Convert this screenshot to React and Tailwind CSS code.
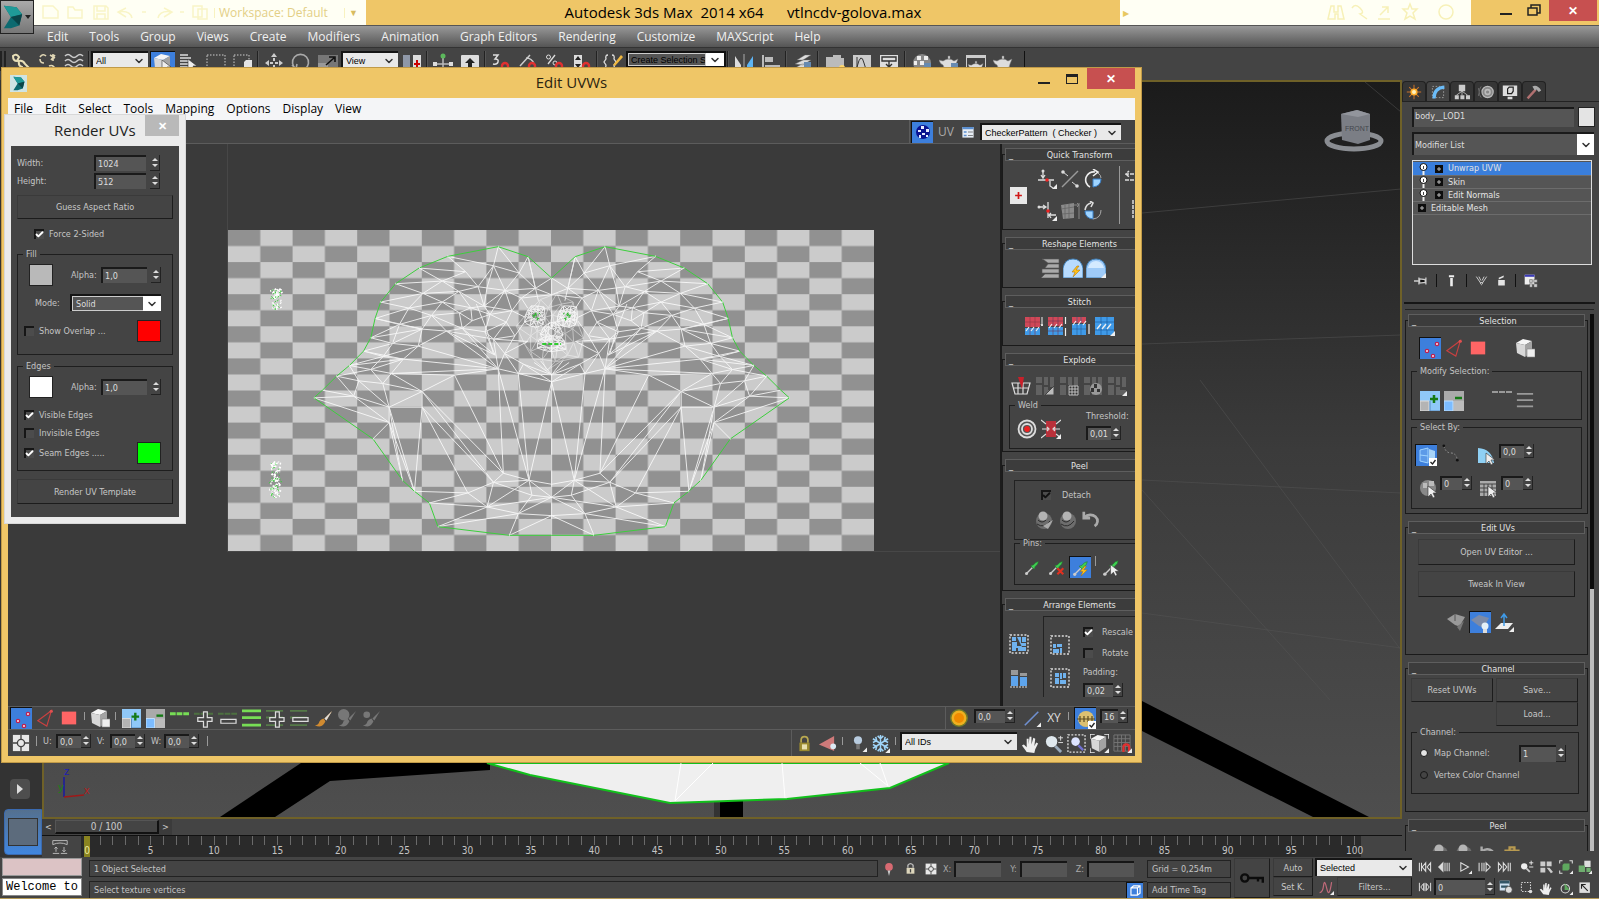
import React from "react";
import clsx from "clsx";
import { ChevronDown, Check } from "lucide-react";

/* ---------- icons, all on a 20x20 grid ---------- */

const corner = <path d="M20 15v5h-5z" fill="#eee" />;
const bolt = <path d="M14 8l-5 6h3l-2 5 7-7h-4l3-4z" fill="#ffc21a" stroke="#a86a00" strokeWidth=".5" />;
const cursor = <path d="M9 7v11l3-3 2 4 2-1-2-4h4z" fill="#eee" stroke="#333" strokeWidth=".6" />;
const cube = (
  <g>
    <path d="M1 5l7-4 9 2-7 4z" fill="#f6f6f6" />
    <path d="M1 5l9 2v12l-8-4z" fill="#d8d8d8" />
    <path d="M10 7l7-4v11l-7 5z" fill="#a4a4a4" />
  </g>
);
const pin = (
  <g>
    <path d="M3 17l7-7" stroke="#ccc" strokeWidth="1.5" />
    <circle cx="3" cy="17" r="1.8" fill="#ccc" />
    <path d="M8 8l4 4 1-3 3-3 1-3-3 1-3 3z" fill="#3fcf52" stroke="#1e7a2a" strokeWidth=".6" />
  </g>
);
const sphere = (
  <g>
    <circle cx="10" cy="11" r="8" fill="#6d6d6d" />
    <circle cx="9" cy="6" r="4.5" fill="#b4b4b4" />
    <path d="M4 10q4 4 8 0M3 14q7 5 13-3" stroke="#2c2c2c" fill="none" />
  </g>
);
const teapot = (
  <path d="M4 9q6-4 11 0l4-2-2 5q-1 6-4 6H8q-3-1-4-5Q1 12 0 8l4 1zM9 4h2v3H9z" fill="#ddd" stroke="#777" strokeWidth=".5" />
);
const magnet = <path d="M11 19v-5a3 3 0 016 0v5" fill="none" stroke="#e03030" strokeWidth="2.4" />;
const blocks = <path d="M1 1h6v6H1zM9 1h4v8H9zM15 1h4v10h-4zM1 9h6v10H1zM9 11h4v3h6v5H9z" />;
const dashBox = <rect x="1" y="1" width="18" height="18" fill="none" stroke="#ddd" strokeWidth="1.4" strokeDasharray="2 1.6" />;
const brush = <path d="M19 2l-8 8 2 2zM10 10q-4 1-5 5-1 2-4 2 8 4 11-4z" />;
const hand = (
  <path d="M6 19q-2-3-5-7l2-1 3 3V5h2v6l1-8h2v8l2-7 2 1-1 8 2-4 2 1-3 6-1 4z" fill="#eee" />
);
const pad = <path d="M1 7l8-5 10 3-4 7-3 2-3-1z" />;

const icons = {
  link: <path d="M3 4q3-3 6 1l-2 4q-4 0-4-5zm6 5q4-1 6 3l4 4-4 3q-3-1-3-4-4-1-3-6z" fill="none" stroke="#e8dfb8" strokeWidth="2" />,
  unlink: <path d="M3 5q3-4 6-1M3 7q0 4 4 4M12 14q4-2 6 3M12 16q1 3 4 3M13 3l5 3M14 8l4-5M16 9V2" fill="none" stroke="#e0d6b4" strokeWidth="1.6" />,
  wave: <path d="M1 4q3-3 6 0t6 0 6 0M1 9q3-3 6 0t6 0 6 0M1 14q3-3 6 0t6 0 6 0" fill="none" stroke="#ccc" strokeWidth="1.6" />,
  pick: <g>{cube}{cursor}</g>,
  byName: <g><path d="M1 3h8M1 6h11M1 9h8M1 12h11M1 15h8" stroke="#ddd" strokeWidth="1.5" />{cursor}</g>,
  region: <rect x="1" y="3" width="18" height="16" fill="none" stroke="#ccc" strokeDasharray="1.5 1.5" />,
  windowed: <g><rect x="1" y="3" width="15" height="16" fill="none" stroke="#ccc" strokeDasharray="1.5 1.5" /><path d="M11 10l2-2h6v9l-2 2h-6z" fill="#e4e4e4" /></g>,
  move: <path d="M10 1l3 4H7zM1 11l4-3v6zM19 11l-4-3v6zM10 20l3-4H7zM9 6h2v3H9zM6 10h3v2H6zM11 10h3v2h-3zM9 13h2v3H9z" fill="#ccc" />,
  rotate: <path d="M5 17A8 8 0 1114 17M1 13l4 4 1-5" fill="none" stroke="#aaa" strokeWidth="1.6" />,
  scale: <g><path d="M0 3h20v17H0z" fill="#777" /><path d="M0 11h10v9H0z" fill="#999" /><path d="M8 13l8-7M11 5h6v5" stroke="#111" strokeWidth="1.6" fill="none" /></g>,
  pivot: <g><path d="M1 3h7v17H1z" fill="#8f98a8" /><path d="M11 3h8v17h-8z" fill="#ddd" /><path d="M15 8v8M12 12h6" stroke="#c00" strokeWidth="2" /></g>,
  manip: <g><path d="M10 5v15M2 12h16" stroke="#bbb" strokeWidth="1.5" /><circle cx="10" cy="4" r="2.5" fill="#5cb85c" /><path d="M0 10h4v4H0zM16 10h4v4h-4z" fill="#ddd" /></g>,
  keyboard: <g><rect x="1" y="3" width="18" height="16" rx="1" fill="#ddd" /><path d="M10 6l5 5h-3v4H8v-4H5z" fill="#222" /></g>,
  snap: <g><path d="M2 3h5l-3 4q4 0 3 3t-5 2" fill="none" stroke="#ddd" strokeWidth="1.5" />{magnet}</g>,
  angle: <g><path d="M2 14L12 3M8 6q6 0 8 6" fill="none" stroke="#ccc" strokeWidth="1.5" />{magnet}</g>,
  percent: <g><path d="M3 12l7-9" stroke="#ddd" strokeWidth="1.3" /><circle cx="3.500" cy="5" r="2" fill="none" stroke="#ddd" /><circle cx="10" cy="11" r="2" fill="none" stroke="#ddd" />{magnet}</g>,
  spinSnap: <g><path d="M2 3h8v14H2z" fill="#ddd" /><path d="M6 4l3 4H3zM6 16l3-4H3z" fill="#222" />{magnet}</g>,
  braces: <g><path d="M5 3q-3 0-2 4l-2 3 2 3q-1 4 2 4M9 3q3 0 2 4l2 3-2 3q1 4-2 4" fill="none" stroke="#ddd" strokeWidth="1.3" /><path d="M10 13l8-10 2 2-8 9z" fill="#f0b840" /></g>,
  mirror: <g><path d="M1 4l6 9v7H1z" fill="#ddd" /><path d="M10 2v18" stroke="#aaa" /><path d="M19 4l-6 9v7h6z" fill="#5db4f4" /></g>,
  align: <path d="M1 3h2v17H1zM4 5h8v5H4zM4 13h15v4H4z" fill="#bbb" />,
  layers: <g><path d="M5 8l8-5h6l-8 5zM3 12l8-4h8l-8 5zM1 17l9-5h8l-8 5z" fill="#ddd" stroke="#666" strokeWidth=".4" /><path d="M12 10h7v9h-7z" fill="#678ab0" /></g>,
  ribbon: <g><path d="M1 5h7V3h8v3h3v12H1z" fill="#bbb" /><circle cx="17" cy="16" r="3" fill="#ffd76a" /></g>,
  curve: <g><path d="M1 3h18v17H1z" fill="#ccc" /><path d="M5 5v13M5 15q4-16 7-4t6 5" fill="none" stroke="#333" /></g>,
  schematic: <g><path d="M1 3h18v17H1z" fill="#ddd" /><path d="M3 5h14v4H3zM10 9v6M7 12l3 3 3-3" fill="none" stroke="#333" strokeWidth="1.4" /></g>,
  material: <g><circle cx="10" cy="11" r="9" fill="#888" /><path d="M5 4h4v4H5zM12 4h4v4h-4zM2 9h3v4H2zM8 9h4v4H8z" fill="#eee" /><path d="M12 11h7v8h-7z" fill="#678ab0" /></g>,
  teapot,
  teapotSetup: <g>{teapot}<path d="M12 11h7v8h-7z" fill="#678ab0" /></g>,
  teapotBox: <g><path d="M0 3h20v17H0z" fill="#ccc" /><path d="M1 6h18v13H1z" fill="#444" /><g transform="translate(2 6) scale(.8)">{teapot}</g></g>,
  /* UV editor */
  checker: <g><circle cx="10" cy="10" r="7" fill="#0a1290" /><path d="M8 4h3v3H8zM13 7h3v3h-3zM5 8h3v2H5zM9 11h3v2H9zM6 13h2v3H6zM13 13h2v2h-2z" fill="#e8ecff" /></g>,
  props: <g><path d="M2 3h16v15H2z" fill="#e8eef6" /><path d="M2 3h16v3H2zM4 9h4v2H4zM4 14h4v2H4z" fill="#5b8fd0" /><path d="M10 10h7M10 15h7" stroke="#555" /></g>,
  vertex: <g fill="#fff" stroke="#c02050" strokeWidth="1.4"><circle cx="16" cy="5" r="1.600" /><circle cx="6" cy="12" r="1.600" /><circle cx="12" cy="17" r="1.600" /></g>,
  edge: <g><path d="M17 2L2 13l10 6z" fill="none" stroke="#c84040" strokeWidth="1.300" /><circle cx="17" cy="2.500" r="1.800" fill="#e05050" /></g>,
  face: <path d="M1 2h18v16H1z" fill="#ff6565" />,
  element: <g>{cube}<path d="M12 11h8v8h-8z" fill="#eee" stroke="#888" strokeWidth=".6" /></g>,
  grow: <g><path d="M0 0h20v20H0z" fill="#8fc8f8" /><path d="M0 10h9v10H0z" fill="#b4b4b4" stroke="#ddd" /><path d="M10 10v10h10" stroke="#5a8cc0" fill="none" /><path d="M14 4v8M10 8h8" stroke="#157a15" strokeWidth="2.500" /></g>,
  shrink: <g><path d="M0 0h20v20H0z" fill="#aaa" /><path d="M10 10h10v10H10z" fill="#bcbcbc" /><path d="M0 10h9v10H0z" fill="#7cbcff" stroke="#bfe0ff" /><path d="M11 7h7" stroke="#157a15" strokeWidth="2.500" /></g>,
  dashesGreen: <path d="M0 5h6M7 5h6M14 5h6" stroke="#77dd55" strokeWidth="3" />,
  dashes: <path d="M0 5h6M7 5h6M14 5h6" stroke="#999" strokeWidth="2" />,
  bars: <path d="M1 2h18M1 9h18M1 16h18" stroke="#999" strokeWidth="2" />,
  barsGreen: <path d="M0 2h20M0 9h20M0 17h20" stroke="#77dd55" strokeWidth="3" />,
  ringPlus: <g><path d="M0 5h6M7 5h6M14 5h6" stroke="#4d7040" strokeWidth="2" /><path d="M10 3h4v6h5v4h-5v6h-4v-6H4V9h6z" fill="#444" stroke="#ddd" strokeWidth="1.300" /></g>,
  ringMinus: <g><path d="M0 5h6M7 5h6M14 5h6" stroke="#4d7040" strokeWidth="2" /><path d="M3 11h16v4H3z" fill="#444" stroke="#ddd" strokeWidth="1.300" /></g>,
  loopPlus: <g><path d="M0 2h18M0 9h18M0 17h18" stroke="#557a48" strokeWidth="2" /><path d="M10 3h4v6h5v4h-5v6h-4v-6H4V9h6z" fill="#444" stroke="#ddd" strokeWidth="1.300" /></g>,
  loopMinus: <g><path d="M0 2h18M0 9h18M0 17h18" stroke="#557a48" strokeWidth="2" /><path d="M3 9h16v4H3z" fill="#444" stroke="#ddd" strokeWidth="1.300" /></g>,
  brush: <g fill="#d08a30">{brush}<path d="M19 2l-8 8 2 2z" fill="#ddd" /></g>,
  brushBig: <g fill="#777"><circle cx="6" cy="6" r="6" />{brush}</g>,
  brushSmall: <g fill="#777"><circle cx="5" cy="6" r="3.500" />{brush}</g>,
  gizmo: <g><path d="M1 1h18v18H1z" fill="#e8e8e8" /><path d="M10 1v18M1 10h18" stroke="#444" strokeWidth="1.500" /><circle cx="10" cy="10" r="4" fill="#e8e8e8" stroke="#444" strokeWidth="1.500" /></g>,
  sun: <g><circle cx="10" cy="10" r="9" fill="#6f7a2a" /><circle cx="10" cy="10" r="7.500" fill="#f0b020" /><circle cx="10" cy="10" r="5" fill="#ee8a00" /></g>,
  slash: <g><path d="M2 18L17 3" stroke="#6f8fd0" strokeWidth="1.800" />{corner}</g>,
  ruler: <g><circle cx="10" cy="10" r="8" fill="#dcc070" /><path d="M1 10h18M4 7v6M8 7v6M12 7v6M16 7v6" stroke="#5a4a20" strokeWidth="1.200" /><path d="M12 12h8v8h-8z" fill="#fff" /><path d="M13.500 16l2 2 3-4" stroke="#222" fill="none" strokeWidth="1.300" /></g>,
  lock: <g><path d="M6 9V6q0-4 4-4t4 4v3" fill="none" stroke="#b8a850" strokeWidth="2" /><path d="M4 9h12v10H4z" fill="#9a8a30" /><path d="M7 11h6v6H7z" fill="#e8e0b0" /></g>,
  flag: <g><path d="M1 11L17 2v16z" fill="#cf7a7a" /><circle cx="16" cy="13" r="3" fill="#dceaf4" /></g>,
  bulb: <g><circle cx="10" cy="7" r="4.500" fill="#b8cce0" /><path d="M8 11h4v6H8z" fill="#777" />{corner}</g>,
  snow: <g><path d="M10 1v18M2 5l16 10M2 15L18 5M7 2l3 3 3-3M7 18l3-3 3 3M2 9l4-2-1-4M18 9l-4-2 1-4M2 11l4 2-1 4M18 11l-4 2 1 4" stroke="#9fd4f8" strokeWidth="1.600" fill="none" />{corner}</g>,
  hand,
  zoom: <g><circle cx="8" cy="8" r="6" fill="#dfe8ee" /><path d="M12 13l6 6" stroke="#9ab" strokeWidth="3" /><path d="M15 4h5M17.500 2v5M15 9h5" stroke="#ddd" /></g>,
  zoomRegion: <g>{dashBox}<circle cx="9" cy="8" r="4.500" fill="#dde4ff" /><path d="M12 12l5 5" stroke="#6f6fd0" strokeWidth="2.500" /></g>,
  extents: <g><path d="M0 5V0h5M15 0h5v5M5 20H0v-5" fill="none" stroke="#eee" strokeWidth="1.500" />{cube}{corner}</g>,
  gridSnap: <g><path d="M1 1h17v17H1zM5 1v17M9 1v17M13 1v17M1 5h17M1 9h17M1 13h17" fill="none" stroke="#777" />{magnet}{corner}</g>,
  /* UV editor side panel */
  alignH: <g><path d="M6 2v6M4 6l2 3 2-3M1 11h16M13 12v5l3 2" stroke="#ddd" strokeWidth="1.300" fill="none" /><circle cx="6" cy="2" r="1.500" fill="#ddd" /><circle cx="10" cy="11" r="1.800" fill="#e22" />{corner}</g>,
  alignV: <g><path d="M1 6h7M6 4l3 2-3 2M11 1v16M12 14h7M14 12l-2 2 2 3" stroke="#ddd" strokeWidth="1.300" fill="none" /><circle cx="2" cy="6" r="1.500" fill="#ddd" /><circle cx="11" cy="10" r="1.800" fill="#e22" />{corner}</g>,
  linear: <g><path d="M2 18L18 2" stroke="#999" strokeWidth="1.500" /><path d="M3 3l5 4M12 13l5 4" stroke="#ddd" /><circle cx="3" cy="3" r="1.800" fill="#ddd" /><circle cx="17" cy="17" r="1.800" fill="#ddd" /></g>,
  skewed: <g><path d="M1 4l13-2v15L3 18z" fill="#8a8a8a" /><path d="M5 4v14M9 3v14M1 8l13-2M2 13l12-1" stroke="#666" strokeWidth=".8" /><path d="M14 4h4M17 2l2 2-2 2M19 2v16" stroke="#888" fill="none" /></g>,
  turnCw: <g><path d="M10 10h8q0 7-8 8z" fill="#9fd4ff" stroke="#3a80c8" /><path d="M7 18A8 8 0 0112 3M10 0l5 3-5 4" fill="none" stroke="#eee" strokeWidth="1.600" /><path d="M15 4q3 2 3 5" fill="none" stroke="#aaa" /></g>,
  turnCcw: <g><path d="M10 10H2q0 7 8 8z" fill="#9fd4ff" stroke="#3a80c8" /><path d="M18 9q0 8-8 9" fill="none" stroke="#aaa" /><path d="M2 9q1-6 6-7M7 0l3 2-2 4" fill="none" stroke="#ddd" strokeWidth="1.600" /></g>,
  pivotPlus: <g><path d="M0 0h20v20H0z" fill="#e8e8e8" /><path d="M10 6v8M6 10h8" stroke="#d01818" strokeWidth="2" /></g>,
  straighten: <path d="M2 1h17v4H8L4 2zM8 6h11v4H5zM2 11h17v4H2zM5 16h14v4H1z" fill="#aaa" stroke="#555" strokeWidth=".6" />,
  relaxAuto: <g><path d="M0 20V10q2-9 10-9t10 9v10z" fill="#b8dcff" stroke="#4080b8" />{bolt}</g>,
  relax: <g><path d="M0 20V10q2-9 10-9t10 9v10z" fill="#9fcbf8" stroke="#4080b8" /><path d="M2 10q2-7 8-7t8 7z" fill="#d4eaff" />{corner}</g>,
  stitchA: <g><path d="M2 1h15v10H2z" fill="#d04858" /><path d="M2 12h15v7H2z" fill="#3f9ae8" /><path d="M7 1v18M12 1v18M2 6h15" stroke="#8c3848" strokeWidth=".6" /><path d="M3 15l3-4M8 15l3-4M13 15l3-4" stroke="#eee" strokeWidth="1.200" /><path d="M19 1v9M18 8l1 2 1-2" stroke="#eee" fill="none" /></g>,
  stitchB: <g><path d="M1 1h15v9H1z" fill="#d04858" /><path d="M1 11h15v8H1z" fill="#3f9ae8" /><path d="M6 1v18M11 1v18M1 5h15M1 15h15" stroke="#6a3a58" strokeWidth=".6" /><path d="M2 12l3-4M7 12l3-4M12 12l3-4M18.500 1v7M18.500 12v8" stroke="#eee" strokeWidth="1.200" /></g>,
  stitchC: <g><path d="M1 1h14v6H1z" fill="#d04858" /><path d="M1 8h14v11H1z" fill="#3f9ae8" /><path d="M6 1v18M10 1v18M1 13h14" stroke="#2a5a90" strokeWidth=".6" /><path d="M2 9l3-4M7 9l3-4M12 9l3-4M18 8v10" stroke="#eee" strokeWidth="1.200" /></g>,
  stitchD: <g><path d="M0 1h19v18H0z" fill="#3f9ae8" /><path d="M0 6h19M0 14h19M6 1v18M12 1v18" stroke="#1c5ea0" strokeWidth=".7" /><path d="M2 13l4-5M7 13l4-5M12 13l4-5" stroke="#eee" strokeWidth="1.300" />{corner}</g>,
  basket: <g><path d="M1 7h18l-3 11H4zM3 12h14M7 7v11M12 7v11" fill="none" stroke="#ddd" strokeWidth="1.200" /><path d="M7 1h6l-2 12z" fill="#c8202a" /></g>,
  breakA: <g fill="#626262">{blocks}<path d="M10 19l9-9v9z" fill="#bbb" stroke="#444" /></g>,
  breakB: <g fill="#626262">{blocks}<path d="M9 10h10v9H9z" fill="#333" /><path d="M10 10h9v9h-9zM13 10v9M16 10v9M10 13h9M10 16h9" stroke="#ccc" fill="none" strokeWidth=".9" /></g>,
  breakC: <g fill="#626262">{blocks}<circle cx="13" cy="13" r="6" fill="#999" /><path d="M11 8h3v4h-3zM8 12h3v4H8zM14 13h3v3h-3z" fill="#333" /></g>,
  breakD: <g fill="#626262">{blocks}{corner}</g>,
  target: <g fill="none" stroke="#ddd" strokeWidth="1.800"><circle cx="10" cy="10" r="8.500" fill="#555" /><circle cx="10" cy="10" r="5" /><circle cx="10" cy="10" r="2" fill="#e22" stroke="#e22" /></g>,
  weld: <g><path d="M5 2h10v16H5z" fill="#b8303a" /><path d="M0 1l5 4M20 1l-5 4M0 19l5-4M20 19l-5-4M1 10h6M19 10h-6M6 8l2 2-2 2M14 8l-2 2 2 2" stroke="#ddd" fill="none" strokeWidth="1.200" />{corner}</g>,
  peel: sphere,
  peelMode: <g>{sphere}<path d="M9 16l10-6-5 9z" fill="#aaa" /></g>,
  undo: <path d="M3 8A8 7 0 1114 18M2 2v7h7" fill="none" stroke="#aaa" strokeWidth="3" />,
  pin,
  unpin: <g>{pin}<path d="M11 11l7 7M18 11l-7 7" stroke="#e03020" strokeWidth="2.500" /></g>,
  autoPin: <g>{pin}{bolt}</g>,
  pickPin: <g>{pin}{cursor}</g>,
  packA: <g fill="#6fb2ee">{dashBox}<path d="M3 3h4v4H3zM8 3h4v6h5v3H8V8H3v9h4v-3h2v3h8v-4h-4M13 3h4v5h-4z" /></g>,
  packB: <g><path d="M2 2h7v5H2zM11 5h7v3h-7z" fill="#999" /><path d="M2 8h7v10H2zM11 9h7v9h-7z" fill="#5da4ec" /><path d="M1 19h18" stroke="#ddd" strokeDasharray="2 1" /></g>,
  packC: <g fill="#6fb2ee">{dashBox}<path d="M3 9h3v4H3zM7 9h5v3H7zM3 14h6v4H3zM10 13h2v5h-2z" /></g>,
  packD: <g fill="#6fb2ee">{dashBox}<path d="M5 5h4v4H5zM10 5h2v6h-2zM13 5h3v5h-3zM5 10h4v6H5zM10 12h6v4h-6z" /></g>,
  /* command panel */
  create: <g><path d="M10 1v18M1 10h18M4 4l12 12M4 16L16 4" stroke="#c8702a" strokeWidth="1.300" /><circle cx="10" cy="10" r="4.500" fill="#ffae2a" /><circle cx="10" cy="10" r="2.500" fill="#fff3c0" /></g>,
  modify: <g><path d="M3 3h14v14H3z" fill="none" stroke="#aaa" strokeDasharray="2 2" /><path d="M5 18Q5 5 18 4" fill="none" stroke="#6bbcf8" strokeWidth="4" /></g>,
  hierarchy: <g fill="#ccc"><path d="M6 1h8v8H6zM1 14h5v5H1zM8 14h5v5H8zM15 14h5v5h-5z" /><path d="M10 9L3 14M10 9v5M10 9l7 5" stroke="#ccc" /></g>,
  motion: <g fill="none" stroke="#bbb"><circle cx="12" cy="10" r="7" fill="#888" strokeWidth="1.500" /><circle cx="12" cy="10" r="3" strokeWidth="2" /><path d="M4 3q-5 7 0 14M1 5q-3 5 0 10" stroke="#777" /></g>,
  display: <g><path d="M1 2h18v13H1zM7 16h6v3H7z" fill="#ddd" /><path d="M7 6l2-2h5v5l-2 3H7z" fill="none" stroke="#222" strokeWidth="1.500" /></g>,
  hammer: <g><path d="M2 18L12 7" stroke="#b07070" strokeWidth="3" /><path d="M8 3q6-3 11 5l-3 2-3-3-2 1z" fill="#aaa" /></g>,
  pinStack: <path d="M0 10h7M7 5v10M8 7l8 1v4l-8 1zM17 5v10" stroke="#ccc" strokeWidth="1.800" fill="#111" />,
  tube: <path d="M6 2h8v3H6zM8 6h4v13H8z" fill="#eee" />,
  unique: <path d="M2 4l6 9h4l6-9M8 13q2 7 4 0M6 4l3 6M14 4l-3 6" fill="none" stroke="#ccc" strokeWidth="1.500" />,
  trash: <path d="M4 9h12v10H4zM5 5l9-4v3L5 8z" fill="#e4e4e4" />,
  config: <g><path d="M1 1h14v14H1z" fill="#eee" /><path d="M1 1h14v3H1z" fill="#3a3ab8" /><path d="M8 8h4v4H8zM14 8h5v4h-5zM8 14h4v5H8zM14 14h5v5h-5z" fill="#ccc" stroke="#333" strokeWidth=".6" /></g>,
  byElement: <g><path d="M3 4l8-2v15l-8-2zM3 9l8 1" fill="#5c9ae8" stroke="#9fd4ff" /><path d="M12 3l6 2v9h-6z" fill="#a8d4f8" /><path d="M12 12h8v8h-8z" fill="#fff" /><path d="M13.500 16l2 2 3-4" stroke="#222" fill="none" strokeWidth="1.300" /></g>,
  path: <g><path d="M2 2q2 8 8 8t7 8" fill="none" stroke="#999" strokeDasharray="2 2" /><circle cx="2" cy="2" r="1.500" fill="#111" /><circle cx="17" cy="18" r="1.500" fill="#111" /></g>,
  fan: <g><path d="M1 2q14 1 16 15H1z" fill="#8fd0f4" />{cursor}</g>,
  ball: <g><circle cx="9" cy="9" r="8" fill="#888" /><path d="M4 4h4v5H4zM10 2h5v5h-5z" fill="#bbb" />{cursor}</g>,
  gridPick: <g><path d="M1 2h16v15H1z" fill="#aaa" /><path d="M5 5v12M9 5v12M13 5v12M1 5h16M1 9h16M1 13h16" stroke="#444" />{cursor}</g>,
  quickPlanar: <g fill="#999">{pad}<path d="M11 15l7-6-4 10z" fill="#777" /><path d="M9 9V2" stroke="#555" /></g>,
  planarShow: <g fill="#7c8ba8">{pad}<circle cx="15" cy="13" r="3.500" fill="#e4f0f8" /><path d="M13 16h4v4h-4z" fill="#ddd" /></g>,
  planarUp: <g><path d="M1 17l6-6h12l-5 6z" fill="#eee" /><path d="M10 14V3M7 6l3-4 3 4" stroke="#3f9ae8" fill="none" strokeWidth="1.500" />{corner}</g>,
  briefcase: <path d="M2 7h16v12H2zM7 7V3h6v4" fill="none" stroke="#b89a50" strokeWidth="3" />,
  /* status bar */
  marker: <g><circle cx="10" cy="7" r="5.500" fill="#d86a72" /><path d="M8 12h4l-2 8z" fill="#ccc" /></g>,
  padlock: <g><path d="M6 9V5q4-5 8 0v4" fill="none" stroke="#bbb" strokeWidth="2" /><path d="M4 9h12v9H4z" fill="#ddd6bc" /><path d="M9 11h2v5H9z" fill="#444" /></g>,
  wireCube: <path d="M3 6l4-3h10v11l-4 3H3zM3 6h10v11M13 6l4-3" fill="none" stroke="#fff" strokeWidth="1.800" />,
  toStart: <path d="M2 4v12M5 4v12M11 4l-5 6 5 6zM18 4l-5 6 5 6z" fill="none" stroke="#ddd" strokeWidth="1.500" />,
  prev: <path d="M7 4l-6 6 6 6zM10 4v12M13 4v12M16 4v12" fill="#ddd" stroke="#ddd" strokeWidth="1.500" />,
  play: <g><path d="M4 4l11 6-11 6z" fill="none" stroke="#ddd" strokeWidth="1.500" />{corner}</g>,
  next: <path d="M3 4v12M7 4v12M10 4v12M13 4l6 6-6 6z" fill="none" stroke="#ddd" strokeWidth="1.500" />,
  toEnd: <path d="M2 4l5 6-5 6zM9 4l5 6-5 6zM16 4v12M19 4v12" fill="none" stroke="#ddd" strokeWidth="1.500" />,
  keyMode: <path d="M2 4v12M8 5l-4 5 4 5zM12 5l4 5-4 5zM18 4v12M10 4v12" fill="none" stroke="#ddd" strokeWidth="1.400" />,
  key: <path d="M1 10a3 3 0 106 0 3 3 0 10-6 0M7 10h12v4M15 10v3" fill="none" stroke="#0c0c0c" strokeWidth="2" />,
  tangent: <g><path d="M2 17q4 0 5-9t4 4 6-8" fill="none" stroke="#c06a7a" strokeWidth="1.500" />{corner}</g>,
  zoomView: <g><circle cx="6" cy="9" r="4.500" fill="#eee" /><path d="M9 12l5 5" stroke="#ccc" strokeWidth="2.500" /><path d="M13 4h6M16 1v6M13 10h6" stroke="#eee" strokeWidth="1.300" /></g>,
  zoomAll: <path d="M2 2h7v7H2zM11 2h7v7h-7zM2 11h7v7H2zM11 11h4l5 6-3 2z" fill="#ccc" />,
  zoomExt: <g><path d="M1 5V1h4M15 1h4v4M5 19H1v-4" fill="none" stroke="#ddd" strokeWidth="1.500" /><path d="M5 7l2-2h8v8l-2 2H5z" fill="#5fa85f" />{corner}</g>,
  zoomExtAll: <g><path d="M9 1h9v9H9z" fill="#ddd" /><path d="M1 8h9v9H1zM12 11h6v6h-6z" fill="#6fae6f" />{corner}</g>,
  timeConfig: <g><path d="M1 1h14v14H1z" fill="#cfe0f0" /><path d="M1 1h14v4H1zM3 8h10v3H3z" fill="#356" /><circle cx="14" cy="14" r="5" fill="#ddd" stroke="#333" /></g>,
  regionZoom: <g><path d="M2 2h13v13H2z" fill="none" stroke="#ddd" strokeDasharray="2 2" strokeWidth="1.500" /><circle cx="15" cy="15" r="2.500" fill="#ddd" /></g>,
  orbit: <g><circle cx="9" cy="11" r="6" fill="none" stroke="#ddd" strokeWidth="1.500" /><path d="M8 3v10h7z" fill="#5fa85f" />{corner}</g>,
  maximize: <g><path d="M2 2h15v15H2z" fill="#ddd" /><path d="M5 11V5h6M6 6l8 8" stroke="#222" strokeWidth="1.600" fill="none" /></g>,
  curveOpen: <path d="M1 2h18v5q-9-4-18 0zM1 18h8M11 18h8M5 16v-6M3 12l2-2 2 2M15 10v6M13 14l2 2 2-2" stroke="#bbb" strokeWidth="1.200" fill="none" />,
};

const Icon = ({ name, className = "size-5" }) => (
  <svg viewBox="0 0 20 20" className={clsx("shrink-0", className)}>{icons[name]}</svg>
);

const Tool = ({ name, on, className = "size-[22px]", icon = "size-5" }) => (
  <button
    aria-label={name}
    className={clsx("flex shrink-0 items-center justify-center", className, on && "border-t border-l border-[#111] bg-[#3d7fdc]")}
  >
    <Icon name={name} className={icon} />
  </button>
);

/* ---------- controls ---------- */

const Select = ({ label, value, light, className }) => (
  <span className={clsx("relative flex shrink-0 border-t-2 border-l-2 border-[#151515]", className)}>
    <select
      aria-label={label}
      className={clsx(
        "h-full w-full appearance-none pl-[3px] pr-[18px] outline-none",
        light ? "bg-[#e9e9e9] font-['Liberation_Sans',sans-serif] text-[9px] text-black" : "border border-[#ccc] bg-[#555] text-[#ddd]"
      )}
    >
      <option>{value}</option>
    </select>
    <span className={clsx("pointer-events-none absolute inset-y-0 right-0 flex w-[18px] items-center justify-center", !light && "bg-white")}>
      <ChevronDown className="size-3 text-[#333]" strokeWidth={3} />
    </span>
  </span>
);

const Arrows = ({ className }) => (
  <span className={clsx("flex w-[10px] shrink-0 flex-col items-center justify-center gap-[3px] border-r border-b border-[#222]", className)}>
    <svg viewBox="0 0 6 3" className="h-[3px] w-[6px]"><path d="M3 0l3 3H0z" fill="#ddd" /></svg>
    <svg viewBox="0 0 6 3" className="h-[3px] w-[6px]"><path d="M0 0h6L3 3z" fill="#ddd" /></svg>
  </span>
);

const Field = ({ label, value, className, gap }) => (
  <span className={clsx("flex shrink-0 items-stretch", gap, className)}>
    <input aria-label={label} defaultValue={value} className="min-w-0 flex-1 border-t-2 border-l-2 border-[#1a1a1a] bg-[#555] pl-[2px] text-[#ddd] outline-none" />
    <Arrows />
  </span>
);

const Tick = ({ label, checked, gap = "gap-[5px]", dark }) => (
  <label className={clsx("flex items-center", gap)}>
    <span className="relative flex size-[10px]">
      <input type="checkbox" defaultChecked={checked} className="peer size-[10px] appearance-none border-t-2 border-l-2 border-[#161616] bg-[#4c4c4c]" />
      <Check className={clsx("pointer-events-none absolute top-[1px] left-[1px] hidden size-[9px] peer-checked:block", dark ? "text-[#111]" : "text-white")} strokeWidth={5} />
    </span>
    {label}
  </label>
);

const PushButton = ({ children, className }) => (
  <button className={clsx("border border-[#3a3a3a] border-r-[#1c1c1c] border-b-[#1c1c1c] bg-[#444] text-[#c8c8c8]", className)}>{children}</button>
);

const Group = ({ title, className, children }) => (
  <fieldset className={clsx("min-w-0 border border-[#1e1e1e]", className)}>
    <legend className="ml-[5px] h-[10px] px-[3px] leading-[10px]">{title}</legend>
    {children}
  </fieldset>
);

const Rollout = ({ title, className, children }) => (
  <section className={clsx("flex flex-col", className)}>
    <h3 className="relative z-10 mx-[3px] flex h-[13px] shrink-0 items-center border border-[#5e5e5e] bg-[#3c3c3c] text-[#e4e4e4]">
      <span className="w-0 pl-[3px]">_</span>
      <span className="flex-1 text-center">{title}</span>
    </h3>
    <div className="-mt-[7px] flex-1 border border-[#1a1a1a] pt-[6px]">{children}</div>
  </section>
);

const Bar = ({ className = "h-4" }) => <span className={clsx("w-px shrink-0 bg-[#999]", className)} />;

/* ---------- UV layout drawing ---------- */

const SEAM =
  "M776 172L721 108 651 78 533 107 466 142 411 189 376 244 363 293 353 351 336 391 303 434 273 466 240 508 220 531 358 654 427 778 455 811 490 846 510 917 677 943H776";

const EDGES = [
  "M651 78L640 135 533 107 575 153 466 142 520 181 411 189 475 218 376 244 442 262 363 293 420 311 353 351 404 368 336 391 382 407 303 434 353 446 273 466 325 480",
  "M651 78L700 157 721 108 738 203 776 172M721 108L745 240M700 157L667 209 640 135 700 157 738 203 667 209 618 256 625 200 640 135",
  "M575 153L604 198 640 135M575 153L520 181 604 198 559 212 520 181 475 218 559 212 520 244 475 218 442 262 520 244 587 261 559 212 618 256 604 198 667 209 632 281 618 256 587 261 632 281",
  "M442 262L495 284 520 244 560 276 587 261 590 300 560 276 495 284 530 331 567 323 560 276M442 262L420 311 495 284 473 325 420 311 404 368 473 325 530 331 464 376 473 325M363 293L473 325 353 351M495 284L567 323",
  "M464 376L404 368 382 407 464 376 429 415 382 407 353 446 401 458 429 415 353 446M336 391L429 415 303 434 325 480 313 526 240 508M273 466L313 526 220 531 396 605 313 526 396 559 325 480 381 488 353 446M401 458L381 488 396 559 473 512 381 488",
  "M401 458L473 512 549 463 401 458M473 512V559H396V605L358 654",
  "M651 444L464 376M651 444L530 331M651 444L429 415M651 444L401 458M651 444L549 463M651 444L567 323M651 444L640 355 530 331M651 444L666 398 698 458 651 444",
  "M632 281L590 300 567 323 620 333 632 281 670 304 620 333 640 355 670 304 690 345 640 355 666 398 690 345M644 403L567 323M644 403L620 333M644 403L530 331M640 355L720 362 666 398 710 430 698 458 776 483M632 281L683 270 670 304M618 256L683 270 667 209 705 232 683 270 715 290M705 232L738 203 776 222 705 232 720 262M600 250L625 330 640 400",
  "M698 458L776 462 710 430M776 483L710 430M776 462L735 425M776 462L750 420M690 345L715 300",
  "M651 444L663 757M698 458L723 778 651 444M776 483L723 778M549 463L663 757 473 512 640 784 473 559 580 816M473 559L455 811 396 559M396 605L455 811M396 559L427 778 396 605",
  "M455 811L580 816 490 846 625 858 580 816 640 784 663 757 723 778 640 784 625 858 510 917 698 878 625 858 723 778 776 790M723 778L730 823 640 784M730 823L776 829 723 778M625 858L776 829 698 878 730 823M698 878L776 884 677 943 698 878",
];

// repeatable jitter for the dense parts of the mesh
const noise = (n) => {
  const v = Math.sin(n * 12.9898) * 43758.5453;
  return v - Math.floor(v);
};

const web = (cx, cy, rx, ry, rings, n) => {
  const at = (r, i) => {
    const a = ((i % n) / n) * Math.PI * 2 + r * 0.3;
    const k = (r / rings) * (0.85 + noise(r * 31 + (i % n)) * 0.3);
    return `${(cx + Math.cos(a) * rx * k).toFixed(1)} ${(cy + Math.sin(a) * ry * k).toFixed(1)}`;
  };
  let d = "";
  for (let r = 1; r <= rings; r++) {
    for (let i = 0; i < n; i++) {
      d += `M${at(r, i)}L${at(r, i + 1)}`;
      if (r < rings) d += `L${at(r + 1, i)}L${at(r, i)}`;
    }
  }
  return d;
};

const scribble = (cx, cy, rx, ry, n, seed) => {
  let d = "";
  for (let i = 0; i < n; i++) {
    const x = cx + (noise(i + seed) - 0.5) * rx * 2;
    const y = cy + (noise(i * 3 + seed + 7) - 0.5) * ry * 2;
    d += `M${x.toFixed(1)} ${y.toFixed(1)}l${(noise(i + 50) * 9 - 4).toFixed(1)} ${(noise(i + 90) * 9 - 4).toFixed(1)}`;
  }
  return d;
};

const outerFace = web(776, 335, 74, 108, 4, 12);
const innerFace = [web(738, 285, 26, 32, 3, 11), web(814, 285, 26, 32, 3, 11), web(776, 335, 24, 34, 3, 9), web(776, 370, 36, 26, 2, 12)].join("");

const HalfMesh = () => (
  <g fill="none">
    <path d={EDGES.join("")} stroke="#fff" strokeWidth="1" vectorEffect="non-scaling-stroke" opacity=".8" />
    <path d={SEAM} stroke="#3ccf3c" strokeWidth="1" vectorEffect="non-scaling-stroke" />
    <path d="M651 78h1M533 107h1M466 142h1M411 189h1M376 244h1M353 351h1M303 434h1M273 466h1M220 531h1M358 654h1M427 778h1M455 811h1M490 846h1M510 917h1M677 943h1" stroke="#fff" strokeWidth="2" vectorEffect="non-scaling-stroke" />
    <path d={scribble(738, 286, 8, 9, 16, 5)} stroke="#2eb82e" strokeWidth="1" vectorEffect="non-scaling-stroke" />
  </g>
);

const UvLayout = () => (
  <svg viewBox="19 28 1511 962" preserveAspectRatio="none" className="block h-[321px] w-[646px]">
    <defs>
      <pattern id="checker" x="19" y="28" width="151.100" height="96.200" patternUnits="userSpaceOnUse">
        <path d="M0 0h151.100v96.200H0z" fill="#cbcbcb" />
        <path d="M0 0h75.550v48.100H0zM75.550 48.100h75.550v48.100H75.550z" fill="#919191" />
      </pattern>
    </defs>
    <path d="M19 28h1511v962H19z" fill="url(#checker)" />
    <g fill="none">
      <path d={outerFace} stroke="#fff" strokeWidth="1" vectorEffect="non-scaling-stroke" opacity=".45" />
      <path d={innerFace} stroke="#fff" strokeWidth="1" vectorEffect="non-scaling-stroke" opacity=".8" />
      <path d="M776 172V943" stroke="#fff" strokeWidth="1" vectorEffect="non-scaling-stroke" opacity=".7" />
    </g>
    <HalfMesh />
    <g transform="matrix(-1 0 0 1 1552 0)"><HalfMesh /></g>
    <g fill="none">
      <path d="M754 370h44" stroke="#2ecc2e" strokeWidth="2" strokeDasharray="4 2" vectorEffect="non-scaling-stroke" />
      <path d={scribble(132, 235, 12, 30, 46, 3) + scribble(130, 742, 10, 20, 26, 11) + scribble(130, 775, 9, 20, 18, 13) + scribble(130, 810, 12, 18, 26, 17)} stroke="#fff" strokeWidth="2" vectorEffect="non-scaling-stroke" />
      <path d={scribble(132, 235, 12, 30, 26, 23) + scribble(130, 775, 12, 52, 34, 31)} stroke="#3ccf3c" strokeWidth="1" vectorEffect="non-scaling-stroke" />
    </g>
  </svg>
);

/* ---------- windows ---------- */

const logo = (
  <g>
    <path d="M4 2l9 1 4 5-2 8-6 2H4l5-8z" fill="#0d6a70" />
    <path d="M4 2l9 1 4 5-8 2z" fill="#1f9a98" />
    <path d="M9 10l8-2-2 8z" fill="#0a4448" />
  </g>
);

const TitleBar = () => (
  <header className="flex h-[25px] shrink-0 justify-between bg-[#efc667] font-['Open_Sans',sans-serif]">
    <div className="flex">
      <button aria-label="Application menu" className="relative z-20 flex h-[34px] w-[34px] items-center border border-[#222] bg-gradient-to-b from-[#aaa] to-[#777]">
        <svg viewBox="2 0 17 20" className="h-7 w-6">{logo}</svg>
        <svg viewBox="0 0 6 4" className="h-1 w-[6px]"><path d="M0 0h6L3 4z" fill="#222" /></svg>
      </button>
      <div className="flex w-[332px] items-center bg-[#fffff4] text-[#e3cf86]">
        <svg viewBox="0 0 180 25" className="h-[25px] w-[180px]" fill="none" stroke="#f9f5c6" strokeWidth="1.500">
          <path d="M9 6h10l5 5v7H9zM34 18V7h5l2 3h7v8zM60 6h12l2 2v11H60zM63 6v5h8V6M63 19v-5h8v5M92 8l-8 4 8 5M84 12q12-2 14 6M108 12h4M130 8l8 4-8 5M138 12q-12-2-14 6M146 12h4M159 6h9v11h-9zM164 9h9v10h-9z" />
        </svg>
        <button className="flex flex-1 items-center whitespace-nowrap border-l border-[#f8f2c0] pl-1 text-[12px]">Workspace: Default</button>
        <span className="mr-1 border-l border-[#f8f2c0] px-1 text-[9px] text-[#d8bc60]">▼</span>
      </div>
    </div>
    <h1 className="flex flex-1 items-center justify-center pb-px text-[15px] whitespace-pre text-black">Autodesk 3ds Max  2014 x64      vtlncdv-golova.max</h1>
    <div className="flex">
      <div className="flex w-[351px] items-center bg-[#fffff4] text-[#e8c860]">
        <span className="pl-[3px] text-[8px]">▶</span>
        <svg viewBox="0 0 140 25" className="ml-auto h-[25px] w-[150px]" fill="none" stroke="#f7f1b8" strokeWidth="1.500">
          <path d="M2 19l3-13h3v6h4V6h3l3 13h-6v-5h-3v5zM26 8q3-5 8 0t0 6l7 5M52 19h12M54 15l8-8M56 7h6v6M77 9h5l2-5 2 5h5l-4 4 2 6-5-3-5 3 2-6z" />
          <circle cx="120" cy="12" r="7" />
        </svg>
      </div>
      <button aria-label="Minimize" className="flex w-[41px] justify-end pt-[13px]"><span className="h-[2px] w-3 bg-[#222]" /></button>
      <button aria-label="Restore" className="flex w-[37px] justify-end pt-1 pr-2">
        <svg viewBox="0 0 14 12" className="h-3 w-[14px]"><path d="M1 4h9v7H1zM4 4V1h9v8h-3" fill="none" stroke="#222" strokeWidth="1.500" /></svg>
      </button>
      <button aria-label="Close" className="mr-[2px] flex h-[21px] w-12 items-center justify-center bg-[#c75050] text-[12px] font-bold text-white">✕</button>
    </div>
  </header>
);

const menus = ["Edit", "Tools", "Group", "Views", "Create", "Modifiers", "Animation", "Graph Editors", "Rendering", "Customize", "MAXScript", "Help"];

const MenuBar = () => (
  <nav className="flex h-[22px] shrink-0 items-center gap-[21px] border-t border-[#555] bg-gradient-to-b from-[#999] to-[#555] pl-[47px] font-['Open_Sans',sans-serif] text-[12px] whitespace-nowrap text-[#f0f0f0]">
    {menus.map((m) => (
      <button key={m}>{m}</button>
    ))}
  </nav>
);

const Sep = ({ wide }) => <span className={clsx("w-[2px] shrink-0 self-stretch border-r border-[#555] bg-[#222]", wide ? "mx-[2px]" : "mx-[1px]")} />;
const Cells = ({ names }) => names.map((n) => <Tool key={n} name={n} className="h-[22px] w-[27px]" />);

const MainToolbar = () => (
  <div className="flex h-[33px] shrink-0 items-start border-t border-[#333] pt-[3px]">
    <span className="h-5 w-[6px] shrink-0 border-x-2 border-[#222]" />
    <Cells names={["link", "unlink", "wave"]} />
    <Sep />
    <Select label="Selection filter" value="All" light className="h-[18px] w-[57px]" />
    <Tool name="pick" on className="ml-[2px] h-[22px] w-[25px]" />
    <Cells names={["byName", "region", "windowed"]} />
    <Sep />
    <Cells names={["move", "rotate", "scale"]} />
    <Select label="Reference coordinates" value="View" light className="h-[18px] w-[57px]" />
    <Cells names={["pivot"]} />
    <Sep />
    <Cells names={["manip", "keyboard"]} />
    <Sep />
    <Cells names={["snap", "angle", "percent", "spinSnap"]} />
    <Sep />
    <Cells names={["braces"]} />
    <span className="relative flex h-[17px] w-[100px] shrink-0 border-2 border-[#111]">
      <input aria-label="Named selection" defaultValue="Create Selection Se" className="w-[78px] border border-[#ccc] bg-[#555] pl-[2px] font-['Liberation_Sans',sans-serif] text-[9px] text-black outline-none" />
      <span className="flex flex-1 items-center justify-center bg-white"><ChevronDown className="size-3 text-[#333]" strokeWidth={3} /></span>
    </span>
    <Sep />
    <Cells names={["mirror", "align"]} />
    <Sep />
    <Cells names={["layers"]} />
    <Sep wide />
    <Cells names={["ribbon", "curve", "schematic"]} />
    <Sep wide />
    <Cells names={["material", "teapotSetup", "teapotBox", "teapot"]} />
    <span className="ml-2 h-6 w-px bg-[#111]" />
  </div>
);

const Viewport = () => (
  <div className="relative min-h-0 flex-1 overflow-hidden border-2 border-[#6f6128] bg-gradient-to-b from-[#1b1b1b] via-[#3b3b3b] to-[#4e4e4e]">
    <svg viewBox="44 82 1356 735" preserveAspectRatio="none" className="block h-full w-full">
      <g fill="none" stroke="#555" strokeWidth="1">
        <path d="M1365 82L1401 112M1142 213L1401 189M1142 344L1401 335M1142 480L1401 493M1142 613L1401 648M1142 490L1330 700M1200 380L1401 650" opacity=".5" />
      </g>
      <path d="M220 817L301 763H490V770L330 781 275 817zM1142 701L1369 817H1313L1142 731z" fill="#000" />
      <path d="M714 800h6v17h-6z" fill="#333" />
      <path d="M720 800h23v17h-23z" fill="#000" />
      <path d="M487 763L530 775 670 803 787 799 890 788 949 763z" fill="#efefef" stroke="#12c01c" strokeWidth="2" />
      <path d="M681 763L675 801 713 763M782 763L785 798M860 763L888 786 880 763" fill="none" stroke="#fff" />
      <path d="M64 777V797" stroke="#1a1aa0" strokeWidth="1.500" />
      <path d="M64 797L84 795" stroke="#a01818" strokeWidth="1.500" />
      <g fontFamily="Liberation Sans, sans-serif" fontSize="11">
        <text x="64" y="775" fill="#2020b0">z</text>
        <text x="84" y="794" fill="#b02020">x</text>
        <text x="58" y="791" fill="#188018">y</text>
      </g>
      <ellipse cx="1354" cy="141" rx="27" ry="8" fill="none" stroke="#8a8d92" strokeWidth="5" />
      <path d="M1341 114l16-4 13 4v26l-12 4-16-4z" fill="#7b7e85" />
      <path d="M1341 114l16-4 13 4-12 3z" fill="#92959c" />
      <text x="1345" y="131" fontSize="7" fontFamily="Liberation Sans, sans-serif" fill="#44474d">FRONT</text>
    </svg>
  </div>
);

const Timeline = () => (
  <>
    <div className="flex h-[16px] shrink-0 items-center text-[#ccc]">
      <button className="w-[13px] self-stretch bg-[#3b3b3b]">&lt;</button>
      <button className="h-[14px] w-[104px] border border-[#555] border-r-2 border-b-2 border-r-[#111] border-b-[#111] text-[10px] leading-[10px]">0 / 100</button>
      <button className="w-[13px] self-stretch bg-[#3b3b3b]">&gt;</button>
    </div>
    <div className="flex h-[22px] shrink-0 border-t border-[#111]">
      <button aria-label="Open mini curve editor" className="flex w-[39px] items-center justify-center pr-1"><Icon name="curveOpen" className="size-4" /></button>
      <div className="relative flex flex-1 bg-[#2a2a2a]">
        {Array.from({ length: 101 }, (_, i) => (
          <div key={i} className="flex w-0 flex-1 flex-col items-center">
            {i === 0 ? (
              <span className="h-full w-[6px] bg-[#8a8420] pt-[9px] text-[10px] leading-[12px] text-[#ece8a0]">0</span>
            ) : (
              <>
                <span className="h-[9px] w-px shrink-0 bg-[#6a6a6a]" />
                {i % 5 === 0 && <span className="text-[10px] leading-[12px] text-[#c4c4c4]">{i}</span>}
              </>
            )}
          </div>
        ))}
      </div>
      <div className="w-[41px]" />
    </div>
  </>
);

const tabs = ["create", "modify", "hierarchy", "motion", "display", "hammer"];
const stack = [
  { name: "Unwrap UVW", on: true, bulb: true },
  { name: "Skin", bulb: true },
  { name: "Edit Normals", bulb: true },
  { name: "Editable Mesh" },
];

const CommandPanel = () => (
  <aside className="flex w-[197px] shrink-0 flex-col overflow-hidden">
    <div className="flex h-[22px] shrink-0 border-b border-[#222] pt-px">
      {tabs.map((t) => (
        <button key={t} aria-label={t} className={clsx("flex w-6 items-center justify-center rounded-t border-x border-t border-[#222]", t === "modify" ? "bg-[#444]" : "bg-[#363636]")}>
          <Icon name={t} className="size-4" />
        </button>
      ))}
    </div>
    <div className="mt-[5px] ml-[10px] flex h-5 shrink-0 gap-1">
      <input aria-label="Object name" defaultValue="body__LOD1" className="w-[162px] border-t-2 border-l-2 border-[#1a1a1a] bg-[#555] pb-1 pl-px text-[#ddd] outline-none" />
      <button aria-label="Object color" className="w-[17px] border border-[#222] bg-[#e4e4e4]" />
    </div>
    <span className="relative mt-[5px] ml-[10px] flex h-[23px] w-[182px] shrink-0 border-t-2 border-l-2 border-[#1a1a1a]">
      <select aria-label="Modifier List" className="w-full appearance-none bg-[#555] pl-px text-[#ddd] outline-none"><option>Modifier List</option></select>
      <span className="pointer-events-none absolute inset-y-0 right-0 flex w-[17px] items-center justify-center bg-white"><ChevronDown className="size-3 text-[#333]" strokeWidth={3} /></span>
    </span>
    <ul className="mt-[5px] ml-[10px] h-[105px] w-[180px] shrink-0 border border-[#ddd] bg-[#555] pt-px text-[#e4e4e4]">
      {stack.map((s) => (
        <li key={s.name} className={clsx("flex items-center border-b border-[#6c6c6c] pl-[5px] leading-none", s.on ? "h-[14px] bg-[#3a7edb]" : "h-[13px]")}>
          {s.bulb && (
            <svg viewBox="0 0 10 12" className="mr-[6px] h-3 w-[11px]">
              <circle cx="5" cy="4" r="3.500" fill="#fff" stroke="#111" /><path d="M5 3v3" stroke="#444" /><path d="M4 8h2v4H4z" fill="#eee" />
            </svg>
          )}
          <svg viewBox="0 0 8 8" className="mr-[5px] size-2"><path d="M0 0h8v8H0z" fill="#0d0d0d" /><path d="M4 2v4M2 4h4" stroke="#bbb" /></svg>
          {s.name}
        </li>
      ))}
    </ul>
    <div className="ml-3 flex h-[31px] shrink-0 items-center gap-2">
      <Icon name="pinStack" className="size-[14px]" />
      <span className="h-[13px] w-px bg-[#111]" />
      <Icon name="tube" className="size-[13px]" />
      <span className="h-[13px] w-px bg-[#111]" />
      <Icon name="unique" className="size-[13px]" />
      <Icon name="trash" className="size-[11px]" />
      <span className="h-[13px] w-px bg-[#111]" />
      <Icon name="config" className="size-[14px]" />
    </div>
    <div className="mr-1 ml-[2px] mt-[6px] h-[2px] shrink-0 bg-[#161616]" />
    <div className="mt-[5px] mr-[5px] mb-[6px] ml-[3px] flex min-h-0 flex-1 gap-[2px] overflow-hidden border-t border-[#222] pt-1">
      <div className="flex w-[183px] flex-col gap-[7px]">
        <Rollout title="Selection" className="h-[200px] shrink-0">
          <div className="mt-[10px] ml-[13px] flex items-center gap-[2px]">
            <Tool name="vertex" on />
            <Tool name="edge" icon="size-[18px]" />
            <Tool name="face" icon="size-4" />
            <Tool name="element" className="ml-[23px] size-[22px]" />
          </div>
          <Group title="Modify Selection:" className="mx-[5px] mt-[7px] h-[54px]">
            <div className="mt-[11px] ml-[8px] flex items-center gap-1">
              <Icon name="grow" />
              <Icon name="shrink" />
              <Icon name="dashes" className="mb-2 ml-[24px] size-5" />
              <Icon name="bars" className="size-[18px]" />
            </div>
          </Group>
          <Group title="Select By:" className="mx-[5px] mt-[2px] h-[87px]">
            <div className="mt-[12px] ml-[3px] flex h-[22px] items-start">
              <Tool name="byElement" on />
              <Icon name="path" className="ml-[5px] size-[18px]" />
              <Icon name="fan" className="mt-[2px] ml-[17px] size-5" />
              <Field label="Planar angle" value="0,0" className="ml-[2px] h-[14px] w-[35px]" />
            </div>
            <div className="mt-[10px] ml-[7px] flex h-[22px] items-start">
              <Icon name="ball" className="mt-[3px] size-5" />
              <Field label="Material ID" value="0" className="ml-[1px] h-[14px] w-[32px]" />
              <Icon name="gridPick" className="mt-[3px] ml-[7px] size-5" />
              <Field label="Smoothing group" value="0" className="ml-[2px] h-[14px] w-[32px]" />
            </div>
          </Group>
        </Rollout>
        <Rollout title="Edit UVs" className="h-[134px] shrink-0">
          <div className="mt-[5px] flex flex-col items-center gap-[6px]">
            <PushButton className="h-[26px] w-[157px]">Open UV Editor ...</PushButton>
            <PushButton className="h-[26px] w-[157px]">Tweak In View</PushButton>
          </div>
          <div className="mt-[14px] flex items-center justify-center gap-[2px] pr-[34px]">
            <Tool name="quickPlanar" />
            <Tool name="planarShow" on />
            <Tool name="planarUp" />
          </div>
        </Rollout>
        <Rollout title="Channel" className="h-[150px] shrink-0">
          <div className="mr-[9px] ml-[5px] mt-[3px] grid grid-cols-2 gap-x-[3px]">
            <PushButton className="h-6">Reset UVWs</PushButton>
            <PushButton className="h-6">Save...</PushButton>
            <span />
            <PushButton className="h-6">Load...</PushButton>
          </div>
          <Group title="Channel:" className="mr-2 ml-[5px] mt-[1px] h-[67px]">
            <div className="mt-[5px] flex h-[22px] items-center pl-2">
              <label className="flex flex-1 items-center gap-[6px]">
                <input type="radio" name="channel" defaultChecked className="size-2 appearance-none rounded-full border border-[#161616] checked:bg-[#e4e4e4]" />
                Map Channel:
              </label>
              <Field label="Map channel" value="1" className="mr-[12px] h-[17px] w-[47px]" />
            </div>
            <label className="flex h-[22px] items-center gap-[6px] pl-2">
              <input type="radio" name="channel" className="size-2 appearance-none rounded-full border border-[#161616] checked:bg-[#e4e4e4]" />
              Vertex Color Channel
            </label>
          </Group>
        </Rollout>
        <Rollout title="Peel" className="h-[100px] shrink-0">
          <div className="mt-[10px] flex gap-[2px] pl-[23px]">
            <Tool name="peelMode" />
            <Tool name="peel" />
            <Tool name="undo" icon="size-4" />
            <Tool name="briefcase" icon="size-4" />
          </div>
        </Rollout>
      </div>
      <div className="flex w-1 flex-col">
        <span className="flex-1 bg-[#0c0c0c]" />
        <span className="h-[262px] bg-[#bdbdbd]" />
      </div>
    </div>
  </aside>
);

const Coord = ({ axis }) => (
  <label className="flex items-center gap-[3px]">
    <span className="text-[#aaa]">{axis}:</span>
    <input className="h-4 w-[47px] border-t-2 border-l-2 border-[#161616] bg-[#555] outline-none" />
  </label>
);

const Small = ({ names }) => names.map((n) => <Tool key={n} name={n} className="h-[17px] w-[18px]" icon="size-[14px]" />);

const StatusBar = () => (
  <footer className="flex h-[42px] shrink-0 border-b border-[#b49a58] pt-[1px]">
    <div className="flex w-[82px] shrink-0 flex-col gap-[2px] pl-[2px]">
      <span className="h-[18px] border border-[#999] bg-[#dcc3c5]" />
      <input aria-label="Listener" defaultValue="Welcome to" className="h-[18px] w-20 border border-[#888] bg-white pl-[3px] font-['Liberation_Mono',monospace] text-[12px] text-black outline-none" />
    </div>
    <div className="ml-[7px] flex min-w-0 flex-1 flex-col gap-1 pt-[2px]">
      <div className="flex h-[18px] items-center">
        <output className="flex h-full flex-1 items-center border border-[#222] pl-1">1 Object Selected</output>
        <div className="flex items-center gap-2 pr-[6px] pl-1">
          <Icon name="marker" className="size-[14px]" />
          <Icon name="padlock" className="size-[13px]" />
          <Icon name="gizmo" className="size-[12px]" />
        </div>
        <div className="flex gap-[9px]">
          <Coord axis="X" />
          <Coord axis="Y" />
          <Coord axis="Z" />
        </div>
        <span className="w-[13px]" />
      </div>
      <div className="flex h-[17px] items-center border-t border-l border-[#222]">
        <output className="flex-1 pl-1">Select texture vertices</output>
        <Tool name="wireCube" on className="mr-1 h-4 w-[17px]" icon="size-[13px]" />
      </div>
    </div>
    <div className="flex w-[84px] flex-col gap-1 pt-[2px]">
      <output className="flex h-[18px] items-center border border-[#222] pl-1">Grid = 0,254m</output>
      <button className="flex h-4 items-center border border-[#222] pl-1">Add Time Tag</button>
    </div>
    <PushButton className="ml-[3px] flex w-9 items-center justify-center"><Icon name="key" className="size-6" /></PushButton>
    <div className="ml-[3px] flex w-10 flex-col">
      <PushButton className="h-[19px]">Auto</PushButton>
      <PushButton className="h-[19px]">Set K.</PushButton>
    </div>
    <div className="ml-[2px] flex w-[97px] flex-col gap-[1px]">
      <Select label="Key set" value="Selected" light className="h-[18px]" />
      <div className="flex">
        <Tool name="tangent" className="h-5 w-[22px]" icon="size-4" />
        <PushButton className="h-[19px] flex-1">Filters...</PushButton>
      </div>
    </div>
    <div className="ml-1 flex w-[101px] flex-col gap-[2px] pr-[4px]">
      <div className="flex h-[18px] items-center justify-between">
        <Small names={["toStart", "prev", "play", "next", "toEnd"]} />
      </div>
      <div className="flex items-center">
        <Small names={["keyMode"]} />
        <Field label="Current frame" value="0" className="h-[17px] w-[61px]" />
        <span className="ml-auto"><Tool name="timeConfig" className="h-[17px] w-[14px]" icon="size-[14px]" /></span>
      </div>
    </div>
    <div className="mr-1 grid w-[78px] grid-cols-4 justify-items-center gap-y-[2px]">
      <Small names={["zoomView", "zoomAll", "zoomExt", "zoomExtAll", "regionZoom", "hand", "orbit", "maximize"]} />
    </div>
  </footer>
);

const uvMenus = ["File", "Edit", "Select", "Tools", "Mapping", "Options", "Display", "View"];

const UvSidePanel = () => (
  <div className="w-[135px] shrink-0 overflow-hidden border-l-2 border-[#1c1c1c] bg-[#444] pt-1">
    <div className="flex w-[152px] flex-col gap-[7px]">
      <Rollout title="Quick Transform" className="h-[82px]">
        <div className="flex items-center pt-[5px] pl-[4px]">
          <Tool name="pivotPlus" icon="size-[17px]" />
          <div className="ml-[8px] grid grid-cols-3 gap-x-[3px] gap-y-[12px]">
            {["alignH", "linear", "turnCw", "alignV", "skewed", "turnCcw"].map((n) => <Icon key={n} name={n} />)}
          </div>
          <Bar className="ml-4 h-[58px]" />
          <svg viewBox="0 0 10 50" className="ml-[5px] h-[50px] w-[10px]"><path d="M9 4H1l3-3M1 4l3 3M0 10h9M8 30v18" fill="none" stroke="#ddd" strokeWidth="1.500" strokeDasharray="4 1" /></svg>
        </div>
      </Rollout>
      <Rollout title="Reshape Elements" className="h-[51px]">
        <div className="flex gap-[3px] pt-[8px] pl-[37px]">
          {["straighten", "relaxAuto", "relax"].map((n) => <Icon key={n} name={n} />)}
        </div>
      </Rollout>
      <Rollout title="Stitch" className="h-[51px]">
        <div className="flex gap-1 pt-[8px] pl-[20px]">
          {["stitchA", "stitchB", "stitchC", "stitchD"].map((n) => <Icon key={n} name={n} />)}
        </div>
      </Rollout>
      <Rollout title="Explode" className="h-[99px]">
        <div className="flex gap-1 pt-[10px] pl-[8px]">
          {["basket", "breakA", "breakB", "breakC", "breakD"].map((n) => <Icon key={n} name={n} />)}
        </div>
        <Group title="Weld" className="mt-[4px] ml-[6px] h-[49px] border-r-0">
          <div className="flex pl-[7px]">
            <Icon name="target" className="mt-[9px] size-5" />
            <Icon name="weld" className="mt-[9px] ml-1 size-5" />
            <div className="ml-[25px] pt-[1px]">
              <div className="h-[15px] leading-[11px]">Threshold:</div>
              <Field label="Threshold" value="0,01" className="h-[14px] w-[35px]" />
            </div>
          </div>
        </Group>
      </Rollout>
      <Rollout title="Peel" className="h-[132px]">
        <div className="mt-[8px] ml-[11px] h-[60px] border border-[#222] pt-[9px]">
          <div className="pl-[26px]"><Tick label="Detach" checked dark gap="gap-[11px]" /></div>
          <div className="mt-[10px] flex gap-1 pl-[19px]">
            <Icon name="peelMode" />
            <Icon name="peel" />
            <Icon name="undo" className="size-[18px]" />
          </div>
        </div>
        <Group title="Pins:" className="-mt-[2px] ml-[11px] h-[47px]">
          <div className="mt-[8px] flex items-center gap-[2px] pl-[6px]">
            <Tool name="pin" icon="size-[17px]" />
            <Tool name="unpin" icon="size-[17px]" />
            <Tool name="autoPin" on icon="size-[18px]" />
            <Bar className="mx-[2px] mb-3 h-[10px]" />
            <Tool name="pickPin" icon="size-[19px]" />
          </div>
        </Group>
      </Rollout>
      <Rollout title="Arrange Elements" className="h-[140px]">
        <div className="flex pt-[5px] pl-[6px]">
          <div className="flex flex-col gap-[14px] pt-[18px]"><Icon name="packA" /><Icon name="packB" /></div>
          <div className="ml-[14px] flex flex-1 gap-[13px] border-t border-l border-[#222] pl-[6px]">
            <div className="flex flex-col gap-[13px] pt-[18px]"><Icon name="packC" /><Icon name="packD" /></div>
            <div className="flex flex-col pt-[10px]">
              <Tick label="Rescale" checked gap="gap-[9px]" />
              <span className="h-[11px]" />
              <Tick label="Rotate" gap="gap-[9px]" />
              <span className="mt-[8px] mb-[4px] leading-[13px]">Padding:</span>
              <Field label="Padding" value="0,02" className="h-[14px] w-10" />
            </div>
          </div>
        </div>
      </Rollout>
    </div>
  </div>
);

const EditUvws = () => (
  <section className="absolute top-[67px] right-[457px] bottom-[136px] left-px flex flex-col border border-[#c09a48] bg-[#efc667] px-[6px] pb-[6px]">
    <header className="flex h-[30px] shrink-0 items-start font-['Open_Sans',sans-serif]">
      <svg viewBox="0 0 20 20" className="mt-[7px] ml-[2px] size-[17px] bg-[#cfe4e4]">{logo}</svg>
      <h2 className="flex-1 self-center pb-[2px] pl-[78px] text-center text-[15px] text-[#2a230f]">Edit UVWs</h2>
      <span className="flex items-center gap-4 pr-[9px]">
        <button aria-label="Minimize editor" className="pt-[14px]"><span className="block h-[2px] w-3 bg-[#222]" /></button>
        <button aria-label="Maximize editor" className="pt-[6px]"><span className="block h-[10px] w-3 border border-t-[3px] border-[#222]" /></button>
      </span>
      <button aria-label="Close editor" className="flex h-[21px] w-12 items-center justify-center bg-[#c75050] text-[12px] font-bold text-white">✕</button>
    </header>
    <nav className="flex h-[22px] shrink-0 items-center gap-3 bg-[#f4f5f7] pl-[6px] font-['Open_Sans',sans-serif] text-[12px] text-black">
      {uvMenus.map((m) => (
        <button key={m}>{m}</button>
      ))}
    </nav>
    <div className="flex h-6 shrink-0 items-center justify-end border-b border-[#5c5c5c] bg-[#444] pr-[14px]">
      <span className="mr-px h-full w-px bg-[#5c5c5c]" />
      <Tool name="checker" on />
      <button className="ml-[5px] font-['Open_Sans',sans-serif] text-[12px] text-[#aaa]">UV</button>
      <Icon name="props" className="mr-[5px] ml-[7px] size-[14px]" />
      <Select label="Texture" value={"CheckerPattern\u00a0 ( Checker )"} light className="h-[17px] w-[141px]" />
    </div>
    <div className="flex min-h-0 flex-1">
      <div className="flex min-w-0 flex-1 flex-col overflow-hidden bg-[#3a3a3a]">
        <div className="ml-[219px] border-b border-l border-[#474747] pt-[86px]"><UvLayout /></div>
      </div>
      <UvSidePanel />
    </div>
    <div className="flex h-6 shrink-0 items-center gap-[2px] border-y border-[#5c5c5c] bg-[#444] pl-[2px]">
      <Tool name="vertex" on />
      <Tool name="edge" icon="size-[18px]" />
      <Tool name="face" icon="size-4" />
      <Bar className="mx-[2px] mb-1 h-2" />
      <Tool name="element" />
      <Bar className="mx-[2px] mb-1 h-2" />
      {["grow", "shrink", "dashesGreen", "ringPlus", "ringMinus", "barsGreen", "loopPlus", "loopMinus", "brush", "brushBig", "brushSmall"].map((n) => (
        <Tool key={n} name={n} icon="size-[19px]" />
      ))}
      <span className="ml-auto h-full w-px bg-[#5c5c5c]" />
      <Tool name="sun" />
      <Field label="Falloff" value="0,0" className="mb-1 ml-[2px] h-[14px] w-[41px]" />
      <Tool name="slash" className="ml-[4px] size-[22px]" icon="size-[18px]" />
      <button className="w-[18px] font-['Open_Sans',sans-serif] text-[12px] text-[#ddd]">XY</button>
      <Bar className="mx-[3px] mb-1 h-2" />
      <Tool name="ruler" on />
      <Field label="Snap size" value="16" className="mr-[7px] mb-1 ml-[2px] h-[14px] w-[28px]" />
    </div>
    <div className="flex h-[26px] shrink-0 items-center bg-[#444] pl-1">
      <Icon name="gizmo" className="size-[18px]" />
      <Bar className="ml-[6px] mb-1 h-[10px]" />
      {["U", "V", "W"].map((a) => (
        <label key={a} className="mb-[5px] ml-[6px] flex items-center gap-[3px]">
          <span className="w-[10px]">{a}:</span>
          <Field label={a} value="0,0" className="h-[14px] w-[35px]" />
        </label>
      ))}
      <Bar className="ml-2 mb-1 h-[10px]" />
      <span className="ml-auto h-full w-px bg-[#5c5c5c]" />
      <Tool name="lock" className="mx-px size-[22px]" icon="size-[17px]" />
      <Tool name="flag" icon="size-[19px]" />
      <Bar className="mx-1 mb-1 h-2" />
      <Tool name="bulb" icon="size-[18px]" />
      <Tool name="snow" icon="size-[19px]" />
      <Bar className="mx-1 mb-1 h-2" />
      <Select label="Material IDs" value="All IDs" light className="mb-1 h-[18px] w-[117px]" />
      <div className="mr-[2px] ml-[2px] flex gap-[1px]">
        {["hand", "zoom", "zoomRegion", "extents", "gridSnap"].map((n) => (
          <Tool key={n} name={n} icon="size-[19px]" />
        ))}
      </div>
    </div>
  </section>
);

const Swatch = ({ label, className }) => <button aria-label={label} className={clsx("h-[22px] w-6 shrink-0 border border-[#222]", className)} />;

const SizeRow = ({ label, value }) => (
  <label className="flex h-[18px] items-center">
    <span className="w-[77px]">{label}</span>
    <Field label={label} value={value} gap="gap-1" className="h-4 w-[66px]" />
  </label>
);

const AlphaRow = ({ swatch }) => (
  <div className="mt-[5px] ml-[11px] flex h-[22px] items-center">
    <Swatch label="Color" className={swatch} />
    <span className="mr-auto ml-[18px]">Alpha:</span>
    <Field label="Alpha" value="1,0" gap="gap-1" className="mr-[11px] h-4 w-[60px]" />
  </div>
);

const RenderUvs = () => (
  <section className="absolute top-[114px] left-[4px] w-[182px] border border-[#d8d8d8] bg-[#ebebeb] px-[6px] pb-[6px]">
    <header className="flex h-[31px] items-start font-['Open_Sans',sans-serif]">
      <h2 className="flex-1 self-center pb-[2px] pl-[43px] text-[15px] whitespace-nowrap text-[#222]">Render UVs</h2>
      <button aria-label="Close Render UVs" className="flex h-[21px] w-[34px] items-center justify-center bg-[#b9b9b9] text-[11px] font-bold text-white">✕</button>
    </header>
    <div className="bg-[#444] px-[6px] pt-[8px] pb-[13px]">
      <SizeRow label="Width:" value="1024" />
      <SizeRow label="Height:" value="512" />
      <PushButton className="mt-[5px] h-6 w-full">Guess Aspect Ratio</PushButton>
      <div className="mt-[10px] ml-[17px] flex h-[10px]"><Tick label="Force 2-Sided" checked /></div>
      <Group title="Fill" className="mt-[10px] h-[106px]">
        <AlphaRow swatch="bg-[#b9b9b9]" />
        <div className="mt-[8px] flex h-[17px] items-center pl-[17px]">
          <span className="w-[35px]">Mode:</span>
          <Select label="Mode" value="Solid" className="h-[17px] w-[91px]" />
        </div>
        <div className="mt-[9px] flex h-[22px] items-center justify-between pr-[11px] pl-[6px]">
          <Tick label="Show Overlap ..." />
          <Swatch label="Overlap color" className="bg-[#ff0000]" />
        </div>
      </Group>
      <Group title="Edges" className="mt-[6px] h-[110px]">
        <AlphaRow swatch="bg-white" />
        <div className="mt-[8px] flex flex-col pr-[11px] pl-[6px]">
          <div className="flex h-[18px] items-center"><Tick label="Visible Edges" checked /></div>
          <div className="flex h-[18px] items-center"><Tick label="Invisible Edges" /></div>
          <div className="flex h-[22px] items-center justify-between">
            <Tick label="Seam Edges ....." checked />
            <Swatch label="Seam color" className="bg-[#00ff00]" />
          </div>
        </div>
      </Group>
      <PushButton className="mt-[8px] h-[25px] w-full">Render UV Template</PushButton>
    </div>
  </section>
);

export default function App() {
  return (
    <div className="relative flex h-screen min-h-[899px] w-full flex-col overflow-hidden bg-[#444] font-['DejaVu_Sans_Condensed','DejaVu_Sans',sans-serif] text-[9px] leading-[10px] text-[#c4c4c4]">
      <TitleBar />
      <MenuBar />
      <MainToolbar />
      <main className="flex min-h-0 flex-1">
        <div className="flex w-[42px] shrink-0 flex-col justify-end gap-[10px] bg-[#333] pb-[2px]">
          <button aria-label="Expand" className="ml-[10px] flex size-5 items-center justify-center rounded-sm bg-[#4e4e4e]">
            <svg viewBox="0 0 6 10" className="h-[10px] w-[6px]"><path d="M0 0l6 5-6 5z" fill="#ddd" /></svg>
          </button>
          <div className="ml-1 h-[46px] rounded-l border border-[#3a6ab0] bg-gradient-to-b from-[#54708f] to-[#3f86e0] px-[3px] pt-2">
            <span className="block h-7 border border-[#333] bg-[#5c6b7c]" />
          </div>
        </div>
        <div className="flex min-w-0 flex-1 flex-col">
          <Viewport />
          <Timeline />
        </div>
        <CommandPanel />
      </main>
      <StatusBar />
      <EditUvws />
      <RenderUvs />
    </div>
  );
}
